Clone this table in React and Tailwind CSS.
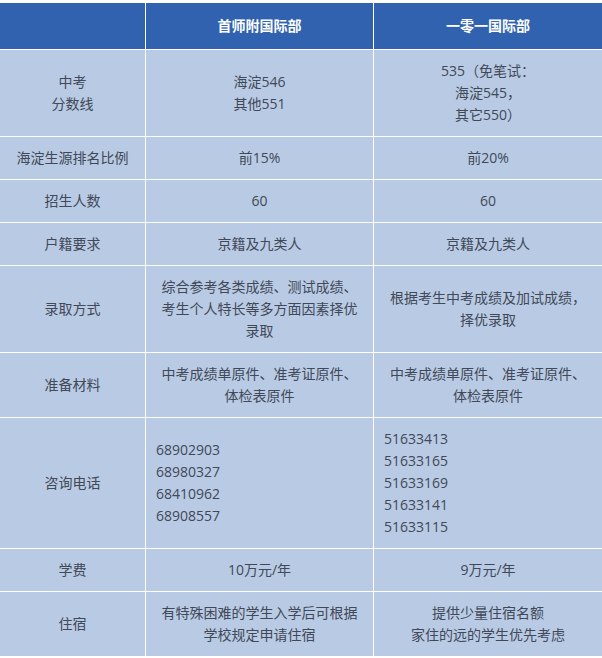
import React from "react";

const rows = [
  { label: ["中考", "分数线"], a: ["海淀546", "其他551"], b: ["535（免笔试：", "海淀545，", "其它550）"] },
  { label: ["海淀生源排名比例"], a: ["前15%"], b: ["前20%"] },
  { label: ["招生人数"], a: ["60"], b: ["60"] },
  { label: ["户籍要求"], a: ["京籍及九类人"], b: ["京籍及九类人"] },
  {
    label: ["录取方式"],
    a: ["综合参考各类成绩、测试成绩、", "考生个人特长等多方面因素择优", "录取"],
    b: ["根据考生中考成绩及加试成绩，", "择优录取"],
  },
  {
    label: ["准备材料"],
    a: ["中考成绩单原件、准考证原件、", "体检表原件"],
    b: ["中考成绩单原件、准考证原件、", "体检表原件"],
  },
  {
    label: ["咨询电话"],
    a: ["68902903", "68980327", "68410962", "68908557"],
    b: ["51633413", "51633165", "51633169", "51633141", "51633115"],
    left: true,
  },
  { label: ["学费"], a: ["10万元/年"], b: ["9万元/年"] },
  {
    label: ["住宿"],
    a: ["有特殊困难的学生入学后可根据", "学校规定申请住宿"],
    b: ["提供少量住宿名额", "家住的远的学生优先考虑"],
  },
];

function Cell({ lines, left }) {
  return (
    <div
      className={
        "bg-[#b9cbe4] py-[10px] px-[10px] flex flex-col justify-center " +
        (left ? "items-start text-left" : "items-center text-center")
      }
    >
      {lines.map((l, i) => (
        <div key={i} className="whitespace-nowrap">
          {l}
        </div>
      ))}
    </div>
  );
}

export default function App() {
  return (
    <div className="w-[602px] h-[658px] overflow-hidden bg-white pt-[3px] font-['Open_Sans','Noto_Sans_CJK_SC',sans-serif] text-[14px] leading-[22px] text-[#414857]">
      <div className="grid grid-cols-[145px_227px_1fr] gap-px bg-white">
        <div className="bg-[#3162af] h-[46px]" />
        <div className="bg-[#3162af] h-[46px] flex items-center justify-center font-bold text-white">
          首师附国际部
        </div>
        <div className="bg-[#3162af] h-[46px] flex items-center justify-center font-bold text-white">
          一零一国际部
        </div>
        {rows.map((r, i) => (
          <React.Fragment key={i}>
            <Cell lines={r.label} />
            <Cell lines={r.a} left={r.left} />
            <Cell lines={r.b} left={r.left} />
          </React.Fragment>
        ))}
      </div>
    </div>
  );
}
